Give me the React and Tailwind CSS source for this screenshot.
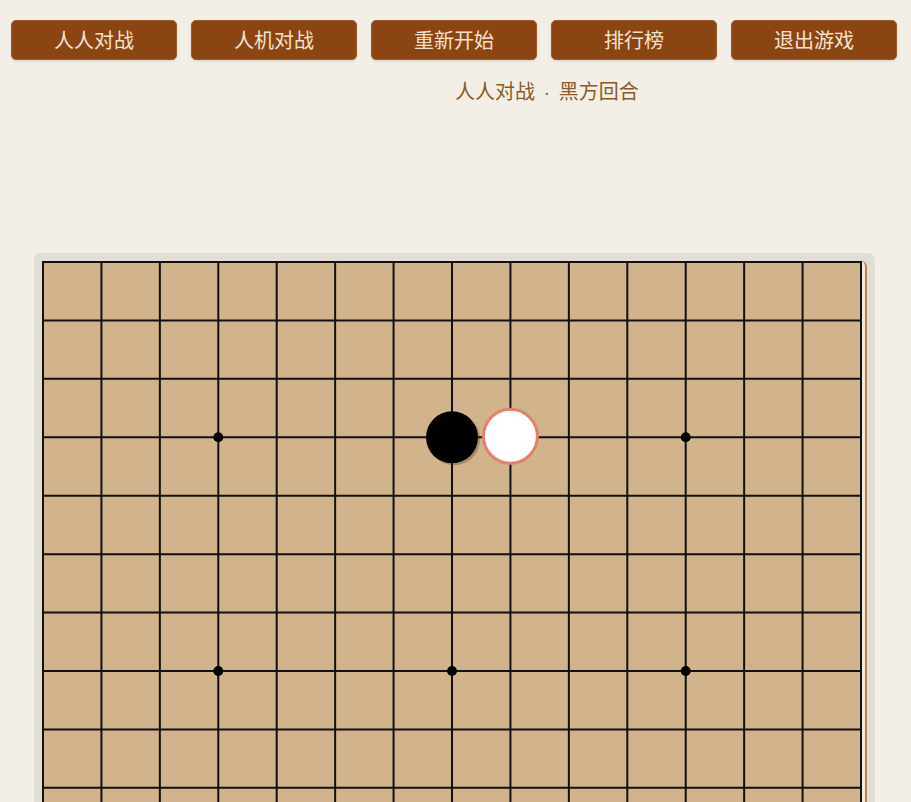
const BUTTONS = ["人人对战", "人机对战", "重新开始", "排行榜", "退出游戏"];

const SIZE = 15;
const STEP = 818 / 14;
const pos = (i) => 1 + i * STEP;
const STARS = [
  [3, 3], [11, 3], [7, 7], [3, 7], [11, 7], [3, 11], [7, 11], [11, 11],
];

function Board() {
  const lines = [];
  for (let i = 0; i < SIZE; i++) {
    lines.push(<line key={"h" + i} x1={0} y1={pos(i)} x2={820} y2={pos(i)} stroke="#111" strokeWidth="2" />);
    lines.push(<line key={"v" + i} x1={pos(i)} y1={0} x2={pos(i)} y2={820} stroke="#111" strokeWidth="2" />);
  }
  return (
    <svg width="820" height="820" className="block shrink-0">
      <rect x="0" y="0" width="820" height="820" fill="#d2b48c" />
      {lines}
      {STARS.map(([c, r]) => (
        <circle key={c + "-" + r} cx={pos(c)} cy={pos(r)} r="5" fill="#000" />
      ))}
      {/* black stone */}
      <circle cx={pos(7) + 2} cy={pos(3) + 2} r="26" fill="rgba(90,60,30,0.35)" />
      <circle cx={pos(7)} cy={pos(3)} r="26" fill="#000" />
      {/* white stone, last move */}
      <circle cx={pos(8)} cy={pos(3) - 1} r="27" fill="#fff" stroke="#e2806a" strokeWidth="3" />
    </svg>
  );
}

export default function App() {
  return (
    <div className="min-h-screen bg-[#f3efe6] font-['Noto_Sans_CJK_SC',sans-serif] overflow-hidden">
      <div className="flex gap-[14px] pl-[11px] pt-[20px]">
        {BUTTONS.map((b) => (
          <button
            key={b}
            className="w-[166px] h-[40px] rounded-[5px] bg-[#8b4513] text-[#f3e2d0] text-[20px] leading-none border border-[#9c5a2c] shadow-sm"
          >
            {b}
          </button>
        ))}
      </div>
      <div className="pl-[455px] mt-[17px] text-[20px] leading-[28px] text-[#8b5a2b]">
        人人对战<span className="mx-[3px] font-['Liberation_Sans',sans-serif]"> · </span>黑方回合
      </div>
      <div className="mt-[147px] ml-[34px] w-[841px] p-[8px] bg-[#e3ded5] rounded-[7px]">
        <div className="flex w-[825px] bg-[#efe9df] border-r-2 border-[#c57a55] rounded-tr-[6px] pr-[3px]">
          <Board />
        </div>
      </div>
    </div>
  );
}
